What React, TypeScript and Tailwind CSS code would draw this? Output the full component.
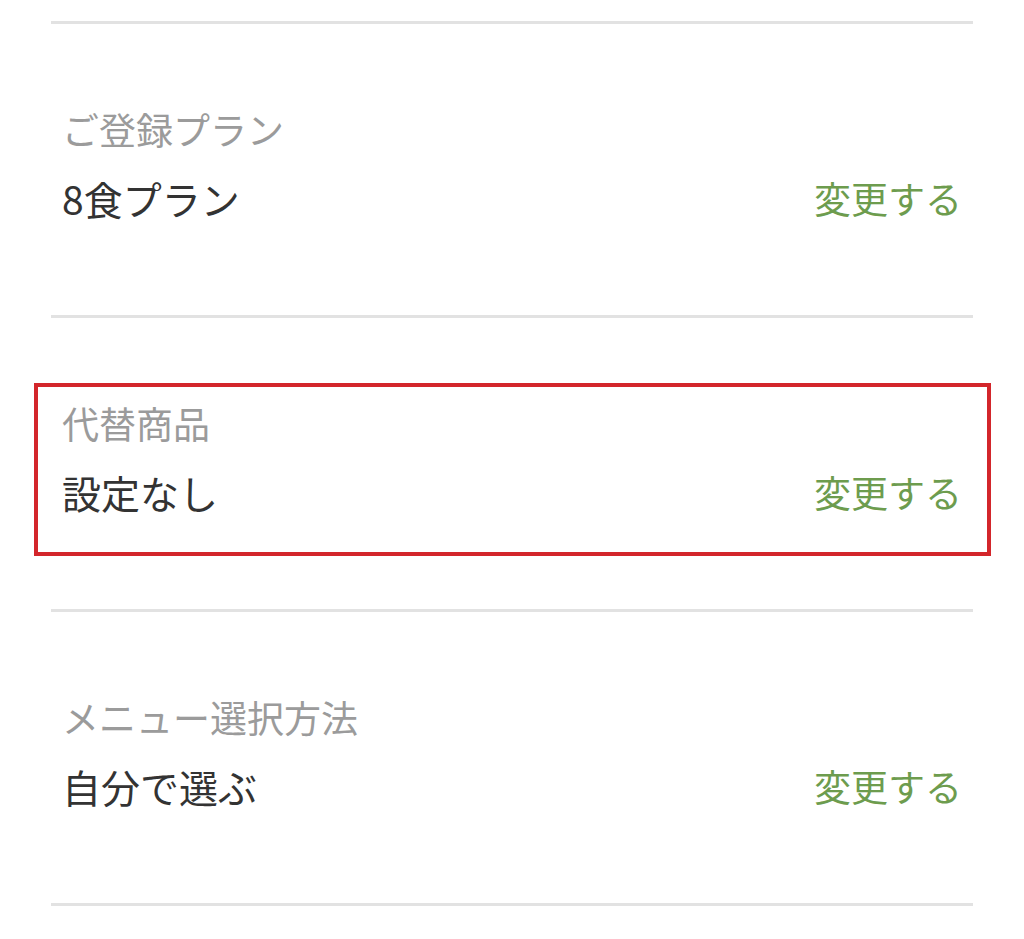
import React from 'react';

interface Setting {
  label: string;
  value: string;
  highlight?: boolean;
}

const settings: Setting[] = [
  { label: 'ご登録プラン', value: '8食プラン' },
  { label: '代替商品', value: '設定なし', highlight: true },
  { label: 'メニュー選択方法', value: '自分で選ぶ' },
];

function SettingRow({ label, value, highlight }: Setting) {
  return (
    <div className="border-t-[3px] border-[#e2e2e2] pt-[65px] pb-[53px]">
      <div
        className={`-ml-[17px] -mr-[18px] h-[173px] border-4 pl-[24px] pr-[25px] pt-[14px] ${
          highlight ? 'border-[#d3262b]' : 'border-transparent'
        }`}
      >
        <p className="text-[37px] leading-[44px] text-[#9b9b9b]">{label}</p>
        <div className="mt-[24px] flex items-center justify-between">
          <span className="text-[39px] leading-[46px] text-[#333333]">{value}</span>
          <button type="button" className="text-[37px] leading-[46px] text-[#6d9c4e]">
            変更する
          </button>
        </div>
      </div>
    </div>
  );
}

export default function App() {
  return (
    <div
      className="min-h-screen bg-white pt-[21px]"
      style={{ fontFamily: '"Noto Sans CJK JP", "Noto Sans", sans-serif' }}
    >
      <div className="ml-[51px] w-[922px]">
        {settings.map((s) => (
          <SettingRow key={s.label} {...s} />
        ))}
        <div className="border-t-[3px] border-[#e2e2e2]" />
      </div>
    </div>
  );
}
